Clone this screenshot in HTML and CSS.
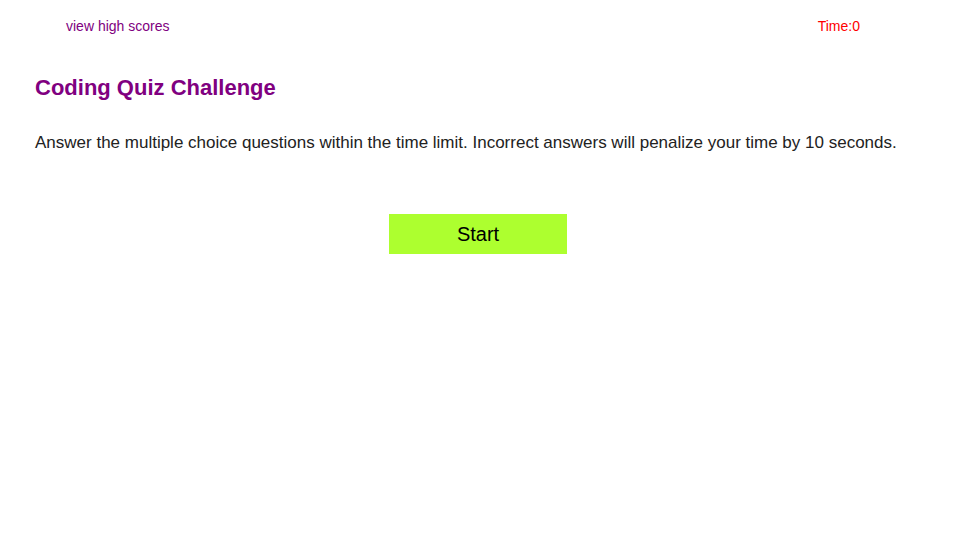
FILE: index.html
```html
<!DOCTYPE html>
<html lang="en">
<head>
<meta charset="utf-8">
<meta name="viewport" content="width=device-width, initial-scale=1">
<title>Coding Quiz Challenge</title>
<link rel="stylesheet" href="styles.css">
</head>
<body>
<header class="top-bar">
<a class="scores-link" href="#">view high scores</a>
<div class="timer">Time:<span>0</span></div>
</header>
<main class="quiz">
<h1 class="title">Coding Quiz Challenge</h1>
<p class="intro">Answer the multiple choice questions within the time limit. Incorrect answers will penalize your time by 10 seconds.</p>
<button class="start" type="button">Start</button>
</main>
</body>
</html>
```
FILE: styles.css
```css
body {
  margin: 0;
  background: #fff;
  color: #222;
  font-family: "Liberation Sans", Arial, sans-serif;
}

.top-bar {
  display: flex;
  justify-content: space-between;
  padding: 16px 100px 0 66px;
  font-size: 14px;
  line-height: 20px;
}

.scores-link {
  color: purple;
  text-decoration: none;
}

.timer {
  color: red;
}

.quiz {
  display: flex;
  flex-direction: column;
  padding: 36px 39px 0 35px;
}

.title {
  margin: 0;
  color: purple;
  font-size: 22px;
  line-height: 32px;
}

.intro {
  margin: 26px 0 0;
  font-size: 17px;
  line-height: 26px;
}

.start {
  align-self: center;
  width: 20%;
  margin: 58px 0 0;
  padding: 8px;
  border: 0;
  background: greenyellow;
  color: #000;
  font-family: inherit;
  font-size: 20px;
  line-height: 24px;
}
```
